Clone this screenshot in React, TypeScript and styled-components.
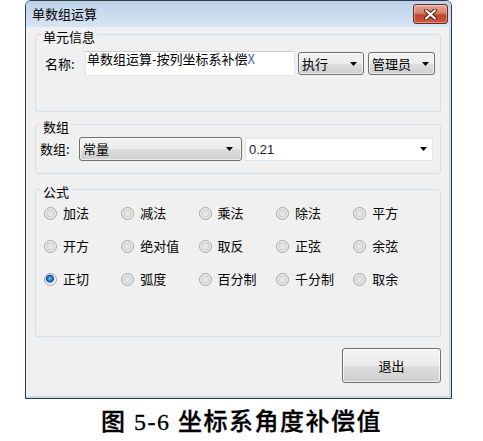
import React from 'react';
import styled, { createGlobalStyle } from 'styled-components';

const GlobalStyle = createGlobalStyle`
  html, body {
    margin: 0;
    padding: 0;
    background: #fff;
  }
  body {
    font-family: 'Noto Sans CJK SC', 'Liberation Sans', sans-serif;
    font-size: 13px;
    color: #000;
  }
`;

const Page = styled.div`
  width: 483px;
  height: 441px;
  overflow: hidden;
`;

const Window = styled.div`
  margin-left: 25px;
  width: 425px;
  border: 1px solid #2f3b47;
  border-radius: 6px 6px 0 0;
  overflow: hidden;
  display: flex;
  flex-direction: column;
`;

const TitleBar = styled.div`
  height: 26px;
  display: flex;
  align-items: center;
  justify-content: space-between;
  padding: 0 3px 0 6px;
  background: linear-gradient(#bcd2ea, #d6e5f4);
`;

const Title = styled.span`
  line-height: 16px;
  color: #000;
`;

const CloseButton = styled.div`
  width: 35px;
  height: 20px;
  box-sizing: border-box;
  border: 1px solid #6b2a20;
  border-radius: 3px;
  display: flex;
  align-items: center;
  justify-content: center;
  background: linear-gradient(#e8a898 0%, #d47f6b 45%, #c1452d 55%, #cc5a40 100%);
  box-shadow: inset 0 0 0 1px rgba(255, 255, 255, 0.35);
`;

const Frame = styled.div`
  padding: 0 2px 2px 0;
  background: #c4d9ee;
`;

const Client = styled.div`
  background: #f0f0f0;
  padding: 7px 8px 13px 9px;
  display: flex;
  flex-direction: column;
`;

const Group = styled.div<{ $top: number; $bottom: number }>`
  margin-top: ${(p) => p.$top}px;
  padding-bottom: ${(p) => p.$bottom}px;
  border: 1px solid #d5dfe5;
  border-radius: 3px;
  display: flex;
  flex-direction: column;
  align-items: flex-start;
`;

const Legend = styled.span`
  margin: -6px 0 0 5px;
  padding: 0 2px;
  line-height: 16px;
  background: #f0f0f0;
`;

const Row = styled.div<{ $top: number; $left: number }>`
  margin: ${(p) => p.$top}px 0 0 ${(p) => p.$left}px;
  display: flex;
  align-items: center;
`;

const Label = styled.span<{ $w: number }>`
  width: ${(p) => p.$w}px;
  line-height: 16px;
`;

const TextBox = styled.div`
  width: 210px;
  height: 25px;
  box-sizing: border-box;
  padding: 0 1px;
  border: 1px solid #e1e6eb;
  border-top-color: #c9ced4;
  background: #fff;
  line-height: 13px;
  white-space: nowrap;
`;

const Caret = styled.span`
  color: #3f5fc8;
`;

const DropButton = styled.div<{ $w: number; $h: number; $gap: number; $arrow: number }>`
  width: ${(p) => p.$w}px;
  height: ${(p) => p.$h}px;
  margin-left: ${(p) => p.$gap}px;
  box-sizing: border-box;
  padding: 0 ${(p) => p.$arrow}px 0 3px;
  border: 1px solid #707070;
  border-radius: 3px;
  display: flex;
  align-items: center;
  justify-content: space-between;
  background: linear-gradient(#f3f3f3 0%, #ebebeb 50%, #dddddd 51%, #cfcfcf 100%);
  box-shadow: inset 0 0 0 1px rgba(255, 255, 255, 0.6);
  line-height: 16px;
`;

const EditCombo = styled.div`
  width: 188px;
  height: 23px;
  margin-left: 3px;
  box-sizing: border-box;
  padding: 0 5px 0 3px;
  border: 1px solid #e1e6eb;
  background: #fff;
  display: flex;
  align-items: center;
  justify-content: space-between;
  font-family: 'Liberation Sans', 'Noto Sans CJK SC', sans-serif;
  color: #1a1a33;
`;

const RadioGrid = styled.div`
  margin: 3px 0 0 8px;
  display: grid;
  grid-template-columns: repeat(5, 77.3px);
  grid-auto-rows: 20px;
  row-gap: 13px;
`;

const RadioItem = styled.label`
  display: flex;
  align-items: center;
  gap: 6px;
  line-height: 16px;
  white-space: nowrap;
`;

const RadioDot = styled.span<{ $checked?: boolean }>`
  width: 13px;
  height: 13px;
  box-sizing: border-box;
  border-radius: 50%;
  border: 1px solid #a3a3a3;
  background: ${(p) =>
    p.$checked
      ? 'radial-gradient(circle at 45% 42%, #8fd3ff 0, #2a86d8 1.8px, #0f4fa0 3.6px, #d9d9d9 4.3px, #f6f6f6 5.5px)'
      : 'radial-gradient(circle, #e9e9e9 0, #e4e4e4 2.5px, #cfcfcf 3.5px, #f7f7f7 5.5px)'};
`;

const ExitButton = styled.div`
  align-self: flex-end;
  margin-top: 11px;
  width: 99px;
  height: 35px;
  box-sizing: border-box;
  border: 1px solid #707070;
  border-radius: 3px;
  display: flex;
  align-items: center;
  justify-content: center;
  background: linear-gradient(#f3f3f3 0%, #ebebeb 50%, #dddddd 51%, #cfcfcf 100%);
  box-shadow: inset 0 0 0 1px rgba(255, 255, 255, 0.7);
  line-height: 16px;
`;

const Caption = styled.div`
  margin-top: 9px;
  text-align: center;
  font-family: 'Liberation Serif', 'Noto Sans CJK SC', serif;
  font-size: 24px;
  font-weight: 500;
  letter-spacing: 1.5px;
  line-height: 28px;
  color: #000;
  -webkit-text-stroke: 0.3px #000;
`;

const Arrow = () => (
  <svg width="7" height="4" viewBox="0 0 7 4">
    <path d="M0 0h7L3.5 4z" fill="#000" />
  </svg>
);

const formulas = [
  '加法', '减法', '乘法', '除法', '平方',
  '开方', '绝对值', '取反', '正弦', '余弦',
  '正切', '弧度', '百分制', '千分制', '取余',
];

export default function App() {
  return (
    <Page>
      <GlobalStyle />
      <Window>
        <TitleBar>
          <Title>单数组运算</Title>
          <CloseButton>
            <svg width="13" height="11" viewBox="0 0 13 11">
              <path d="M2 1.5l9 8M11 1.5l-9 8" stroke="#4a1a12" strokeWidth="4" strokeLinecap="round" />
              <path d="M2 1.5l9 8M11 1.5l-9 8" stroke="#fff" strokeWidth="2.2" strokeLinecap="round" />
            </svg>
          </CloseButton>
        </TitleBar>
        <Frame>
          <Client>
            <Group $top={0} $bottom={35}>
              <Legend>单元信息</Legend>
              <Row $top={6} $left={9}>
                <Label $w={40}>名称:</Label>
                <TextBox>
                  单数组运算-按列坐标系补偿<Caret>X</Caret>
                </TextBox>
                <DropButton $w={66} $h={23} $gap={3} $arrow={6}>
                  执行
                  <Arrow />
                </DropButton>
                <DropButton $w={67} $h={23} $gap={4} $arrow={5}>
                  管理员
                  <Arrow />
                </DropButton>
              </Row>
            </Group>

            <Group $top={12} $bottom={12}>
              <Legend>数组</Legend>
              <Row $top={2} $left={4}>
                <Label $w={39}>数组:</Label>
                <DropButton $w={163} $h={24} $gap={0} $arrow={8}>
                  常量
                  <Arrow />
                </DropButton>
                <EditCombo>
                  0.21
                  <Arrow />
                </EditCombo>
              </Row>
            </Group>

            <Group $top={15} $bottom={47}>
              <Legend>公式</Legend>
              <RadioGrid>
                {formulas.map((f) => (
                  <RadioItem key={f}>
                    <RadioDot $checked={f === '正切'} />
                    {f}
                  </RadioItem>
                ))}
              </RadioGrid>
            </Group>

            <ExitButton>退出</ExitButton>
          </Client>
        </Frame>
      </Window>
      <Caption>图 5-6 坐标系角度补偿值</Caption>
    </Page>
  );
}
